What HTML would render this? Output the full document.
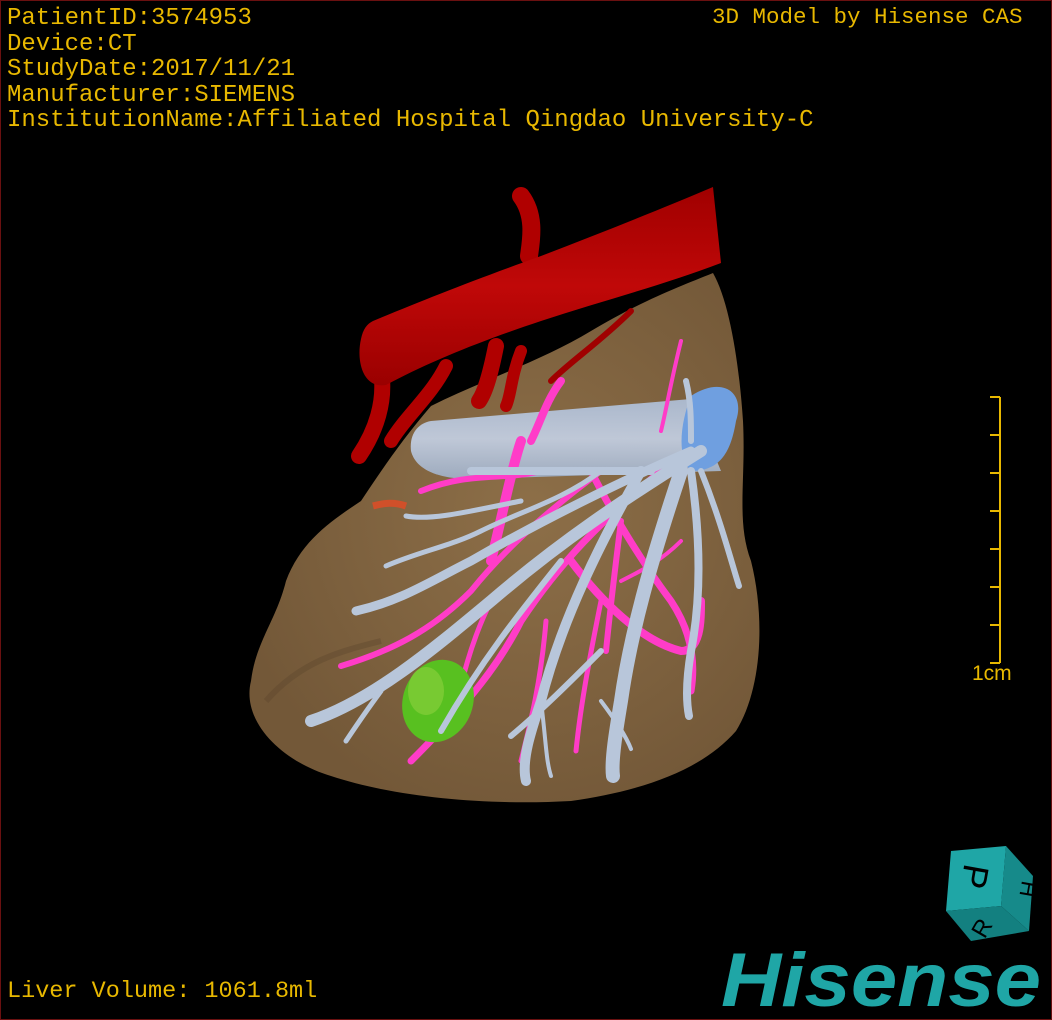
<!DOCTYPE html>
<html><head><meta charset="utf-8"><style>
html,body{margin:0;padding:0;background:#000;}
#c{position:relative;width:1052px;height:1020px;background:#000;overflow:hidden;box-sizing:border-box;border:1px solid #6a1010;}
.t{position:absolute;color:#e8b800;font-family:"Liberation Mono",monospace;white-space:pre;line-height:1;}
</style></head><body><div id="c">
<svg width="1052" height="1020" style="position:absolute;left:0;top:0">
<defs>
<radialGradient id="lv" cx="0.55" cy="0.45" r="0.6"><stop offset="0" stop-color="#8d6f48"/><stop offset="1" stop-color="#735838"/></radialGradient>
<linearGradient id="cyl" x1="0" y1="0" x2="0" y2="1"><stop offset="0" stop-color="#aebfd8"/><stop offset="0.5" stop-color="#c4d0e4"/><stop offset="1" stop-color="#9fb0c8"/></linearGradient>
<linearGradient id="ao" x1="0" y1="0" x2="0" y2="1"><stop offset="0" stop-color="#a00000"/><stop offset="0.5" stop-color="#c00808"/><stop offset="1" stop-color="#9a0000"/></linearGradient>
</defs>
<path d="M250,680 C255,640 275,620 285,580 C300,540 330,520 360,500 C380,470 400,440 430,405 C480,380 540,360 590,330 C640,300 680,285 712,272 C728,300 738,360 742,420 C745,480 735,520 750,560 C765,620 760,690 735,730 C700,770 640,790 570,800 C480,805 390,795 330,775 C280,760 240,720 250,680 Z" fill="url(#lv)"/>
<path d="M265,700 C300,660 340,650 380,640" stroke="#5c452c" stroke-width="6" fill="none" opacity="0.4"/>
<g fill="none" stroke="#b00000" stroke-linecap="round">
<path d="M520,195 C535,215 530,240 528,255" stroke-width="18"/>
<path d="M380,370 C385,400 375,430 358,455" stroke-width="16"/>
<path d="M445,365 C430,395 405,415 390,440" stroke-width="14"/>
<path d="M495,345 C490,370 485,390 478,400" stroke-width="16"/>
<path d="M520,350 C510,375 510,395 505,405" stroke-width="12"/>
<path d="M630,310 C600,340 570,360 550,380" stroke-width="6" stroke="#a00000"/>
</g>
<path d="M372,320 C420,300 470,280 540,255 C600,232 660,208 712,186 L720,262 C660,285 600,300 540,320 C480,340 430,360 385,384 C362,388 355,360 360,338 C362,328 366,323 372,320 Z" fill="url(#ao)"/>
<path d="M405,505 C390,500 380,503 372,505" stroke="#d0502a" stroke-width="7" fill="none"/>
<path d="M430,420 L690,398 L720,470 L470,478 C440,478 415,470 410,450 C408,432 418,422 430,420 Z" fill="url(#cyl)" opacity="0.92"/>
<path d="M690,395 C720,375 745,390 735,420 C730,450 720,470 690,470 C675,455 680,420 690,395 Z" fill="#6f9fe0"/>
<g fill="none" stroke="#ff3cc8" stroke-linecap="round">
<path d="M660,470 C600,520 560,560 520,620 C500,660 470,700 410,760" stroke-width="7"/>
<path d="M600,470 C560,500 510,540 470,590 C430,630 390,650 340,665" stroke-width="6"/>
<path d="M540,470 C500,480 470,470 420,490" stroke-width="6"/>
<path d="M520,440 C510,470 500,520 490,560" stroke-width="10"/>
<path d="M560,380 C545,400 540,420 530,440" stroke-width="8"/>
<path d="M590,470 C610,510 640,560 670,600 C690,630 695,660 690,690" stroke-width="7"/>
<path d="M570,560 C600,600 640,640 680,650 C700,650 700,620 700,600" stroke-width="8"/>
<path d="M600,600 C590,650 580,700 575,750" stroke-width="5"/>
<path d="M545,620 C540,680 530,720 520,760" stroke-width="5"/>
<path d="M490,600 C470,640 460,680 450,730" stroke-width="5"/>
<path d="M680,540 C660,560 640,570 620,580" stroke-width="4"/>
<path d="M680,340 C670,380 665,410 660,430" stroke-width="4"/>
<path d="M620,520 C615,560 610,600 605,650" stroke-width="6"/>
</g>
<ellipse cx="437" cy="700" rx="35" ry="42" fill="#58c020" transform="rotate(20 437 700)"/>
<ellipse cx="425" cy="690" rx="18" ry="24" fill="#8ed040" opacity="0.6"/>
<g fill="none" stroke="#b8c6da" stroke-linecap="round">
<path d="M700,450 C620,500 560,540 490,600 C430,650 370,700 310,720" stroke-width="12"/>
<path d="M690,450 C620,480 540,520 470,560 C430,580 400,600 355,610" stroke-width="9"/>
<path d="M650,470 C580,470 520,470 470,470" stroke-width="8"/>
<path d="M640,470 C600,540 560,620 540,700 C530,730 520,760 525,780" stroke-width="10"/>
<path d="M680,470 C650,560 630,630 620,700 C615,730 610,760 612,775" stroke-width="14"/>
<path d="M690,470 C700,540 700,600 690,650 C685,680 685,700 688,715" stroke-width="8"/>
<path d="M700,470 C720,520 730,560 738,585" stroke-width="6"/>
<path d="M560,560 C520,610 480,660 440,730" stroke-width="6"/>
<path d="M520,500 C470,510 430,520 405,515" stroke-width="5"/>
<path d="M600,470 C560,500 520,510 480,530 C450,545 420,550 385,565" stroke-width="5"/>
<path d="M600,650 C570,680 540,710 510,735" stroke-width="6"/>
<path d="M380,690 C365,710 355,725 345,740" stroke-width="5"/>
<path d="M685,380 C690,400 690,420 690,440" stroke-width="6"/>
<path d="M540,700 C545,740 545,760 550,775" stroke-width="4"/>
<path d="M600,700 C615,720 625,735 630,748" stroke-width="4"/>
</g>
<g stroke="#e8b800" stroke-width="2" fill="none">
<path d="M999,396 L999,662"/>
<path d="M989,396 H999 M989,434 H999 M989,472 H999 M989,510 H999 M989,548 H999 M989,586 H999 M989,624 H999 M989,662 H999"/>
</g>
<g>
<polygon points="950,850 1005,845 1000,905 945,910" fill="#1fa6a6"/>
<polygon points="1005,845 1032,875 1028,930 1000,905" fill="#168a8a"/>
<polygon points="945,910 1000,905 1028,930 970,940" fill="#138080"/>
<text x="962" y="893" font-family="Liberation Sans,sans-serif" font-size="36" fill="#000" transform="rotate(100 976 878)">P</text>
<text x="1008" y="880" font-family="Liberation Sans,sans-serif" font-size="22" fill="#000" transform="rotate(100 1015 885)">H</text>
<text x="970" y="935" font-family="Liberation Sans,sans-serif" font-size="24" fill="#000" transform="rotate(-60 980 925)">R</text>
</g>
<text x="720" y="1005" font-family="Liberation Sans,sans-serif" font-weight="bold" font-style="italic" font-size="76" fill="#1fa6a6" textLength="320" lengthAdjust="spacingAndGlyphs">Hisense</text>
</svg>
<div class="t" style="left:6px;top:5px;font-size:24px;line-height:25.6px">PatientID:3574953
Device:CT
StudyDate:2017/11/21
Manufacturer:SIEMENS
InstitutionName:Affiliated Hospital Qingdao University-C</div>
<div class="t" style="left:711px;top:5px;font-size:22.5px">3D Model by Hisense CAS</div>
<div class="t" style="left:6px;top:979px;font-size:23.5px">Liver Volume: 1061.8ml</div>
<div class="t" style="left:971px;top:662px;font-size:21px;font-family:'Liberation Sans',sans-serif">1cm</div>
</div></body></html>
